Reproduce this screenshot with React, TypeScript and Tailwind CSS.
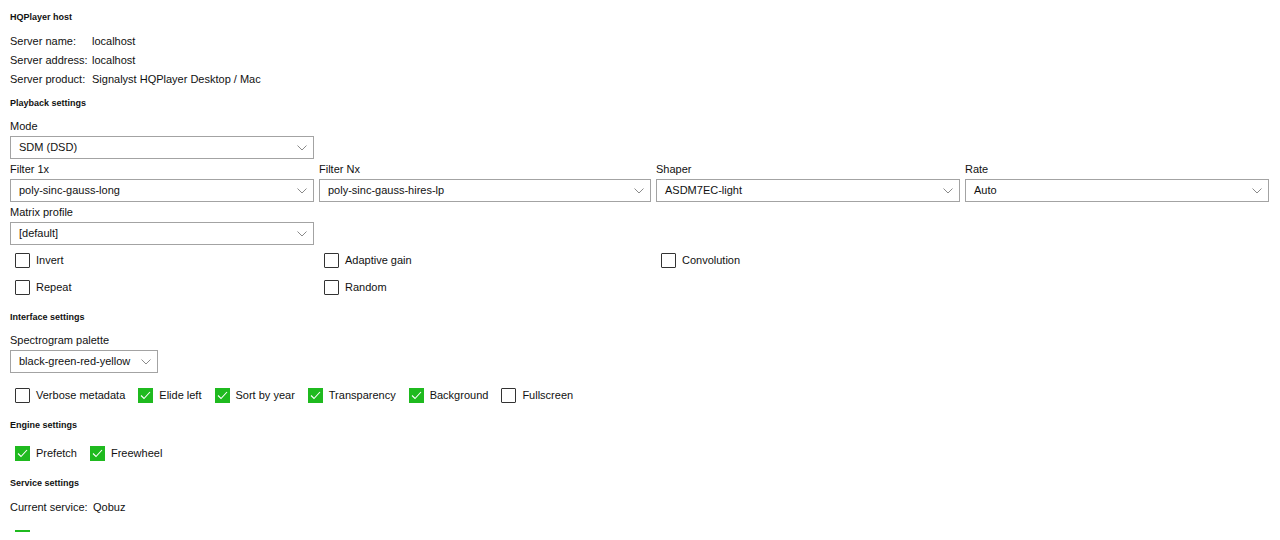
import React from 'react';

const font = { fontFamily: '"Liberation Sans", Arial, sans-serif' };

const Chevron = () => (
  <svg width="10" height="6" viewBox="0 0 10 6" className="shrink-0">
    <path d="M0.5 0.5 L5 5 L9.5 0.5" fill="none" stroke="#8a8a8a" strokeWidth="1" />
  </svg>
);

const Select: React.FC<{ value: string; w: string }> = ({ value, w }) => (
  <div
    className={`${w} h-[23px] flex items-center justify-between border-[1.5px] border-[#a3a3a3] bg-white pl-[8px] pr-[6px] text-[11px] text-[#111] whitespace-nowrap`}
  >
    <span>{value}</span>
    <Chevron />
  </div>
);

const Field: React.FC<{ label: string; value: string; w: string }> = ({ label, value, w }) => (
  <div className="flex flex-col">
    <div className="h-[20px] leading-[20px] text-[11px] text-[#111] whitespace-nowrap">{label}</div>
    <Select value={value} w={w} />
  </div>
);

const Check: React.FC<{ label: string; on?: boolean }> = ({ label, on }) => (
  <div className="flex items-center gap-[6px] h-[18px] whitespace-nowrap">
    {on ? (
      <div className="w-[15px] h-[15px] bg-[#1fba1f] flex items-center justify-center">
        <svg width="11" height="9" viewBox="0 0 11 9">
          <path d="M1 4.5 L4 7.5 L10 1" fill="none" stroke="white" strokeWidth="1.1" />
        </svg>
      </div>
    ) : (
      <div className="w-[15px] h-[15px] border-[1.5px] border-[#333] rounded-[1px] bg-white" />
    )}
    {label && <span className="text-[11px] text-[#111]">{label}</span>}
  </div>
);

const Heading: React.FC<{ children: React.ReactNode }> = ({ children }) => (
  <div className="text-[9px] font-bold text-[#111] h-[12px] leading-[12px] whitespace-nowrap">{children}</div>
);

const App: React.FC = () => {
  return (
    <div className="w-[1280px] h-[540px] overflow-hidden bg-white pl-[10px]" style={font}>
      <div className="pt-[11px]">
        <Heading>HQPlayer host</Heading>
        <div className="grid grid-cols-[82px_1fr] mt-[9px] text-[11px] text-[#111] leading-[19px] whitespace-nowrap">
          <span>Server name:</span>
          <span>localhost</span>
          <span>Server address:</span>
          <span>localhost</span>
          <span>Server product:</span>
          <span>Signalyst HQPlayer Desktop / Mac</span>
        </div>
      </div>

      <div className="mt-[8px]">
        <Heading>Playback settings</Heading>
        <div className="mt-[7px]">
          <Field label="Mode" value="SDM (DSD)" w="w-[304px]" />
        </div>
        <div className="flex gap-[5px]">
          <Field label="Filter 1x" value="poly-sinc-gauss-long" w="w-[304px]" />
          <Field label="Filter Nx" value="poly-sinc-gauss-hires-lp" w="w-[332px]" />
          <Field label="Shaper" value="ASDM7EC-light" w="w-[304px]" />
          <Field label="Rate" value="Auto" w="w-[304px]" />
        </div>
        <Field label="Matrix profile" value="[default]" w="w-[304px]" />
        <div className="grid grid-cols-[309px_337px_1fr] gap-y-[9px] pl-[5px] mt-[6px]">
          <Check label="Invert" />
          <Check label="Adaptive gain" />
          <Check label="Convolution" />
          <Check label="Repeat" />
          <Check label="Random" />
        </div>
      </div>

      <div className="mt-[15px]">
        <Heading>Interface settings</Heading>
        <div className="mt-[7px]">
          <Field label="Spectrogram palette" value="black-green-red-yellow" w="w-[148px]" />
        </div>
        <div className="flex gap-[13px] pl-[5px] mt-[13px]">
          <Check label="Verbose metadata" />
          <Check label="Elide left" on />
          <Check label="Sort by year" on />
          <Check label="Transparency" on />
          <Check label="Background" on />
          <Check label="Fullscreen" />
        </div>
      </div>

      <div className="mt-[15px]">
        <Heading>Engine settings</Heading>
        <div className="flex gap-[13px] pl-[5px] mt-[13px]">
          <Check label="Prefetch" on />
          <Check label="Freewheel" on />
        </div>
      </div>

      <div className="mt-[15px]">
        <Heading>Service settings</Heading>
        <div className="flex mt-[9px] text-[11px] text-[#111] leading-[19px] whitespace-nowrap">
          <span className="w-[83px]">Current service:</span>
          <span>Qobuz</span>
        </div>
        {/* next checkbox row, cut off by the viewport */}
        <div className="h-[2px] overflow-hidden pl-[5px] mt-[13px]">
          <div className="w-[15px] h-[15px] bg-[#1fba1f]" />
        </div>
      </div>
    </div>
  );
};

export default App;
